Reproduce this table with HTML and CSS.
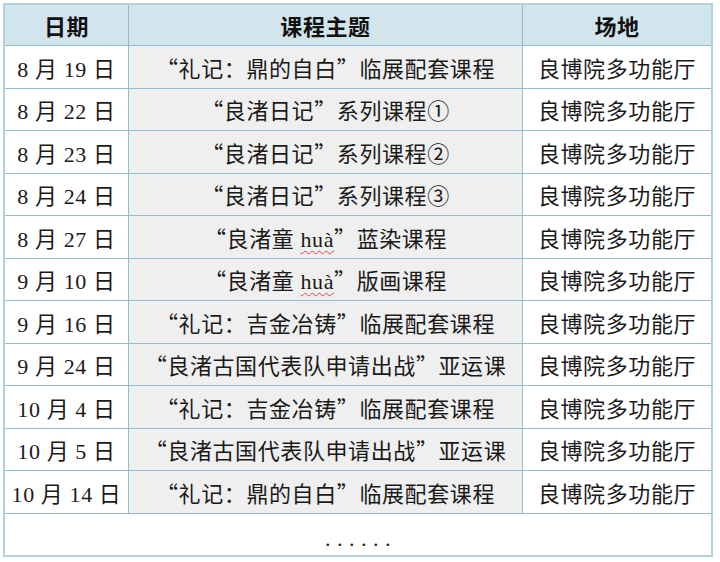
FILE: index.html
```html
<!DOCTYPE html>
<html lang="zh-CN">
<head>
<meta charset="utf-8">
<title>课程安排</title>
<link rel="stylesheet" href="styles.css">
</head>
<body>
<table class="schedule">
  <thead>
    <tr><th class="c-date">日期</th><th class="c-topic">课程主题</th><th class="c-place">场地</th></tr>
  </thead>
  <tbody>
    <tr><td class="c-date">8 月 19 日</td><td class="c-topic"><span class="q">“</span>礼记：鼎的自白<span class="q">”</span>临展配套课程</td><td class="c-place">良博院多功能厅</td></tr>
    <tr><td class="c-date">8 月 22 日</td><td class="c-topic"><span class="q">“</span>良渚日记<span class="q">”</span>系列课程①</td><td class="c-place">良博院多功能厅</td></tr>
    <tr><td class="c-date">8 月 23 日</td><td class="c-topic"><span class="q">“</span>良渚日记<span class="q">”</span>系列课程②</td><td class="c-place">良博院多功能厅</td></tr>
    <tr><td class="c-date">8 月 24 日</td><td class="c-topic"><span class="q">“</span>良渚日记<span class="q">”</span>系列课程③</td><td class="c-place">良博院多功能厅</td></tr>
    <tr><td class="c-date">8 月 27 日</td><td class="c-topic"><span class="q">“</span>良渚童 <span class="spell">huà</span><span class="q">”</span>蓝染课程</td><td class="c-place">良博院多功能厅</td></tr>
    <tr><td class="c-date">9 月 10 日</td><td class="c-topic"><span class="q">“</span>良渚童 <span class="spell">huà</span><span class="q">”</span>版画课程</td><td class="c-place">良博院多功能厅</td></tr>
    <tr><td class="c-date">9 月 16 日</td><td class="c-topic"><span class="q">“</span>礼记：吉金冶铸<span class="q">”</span>临展配套课程</td><td class="c-place">良博院多功能厅</td></tr>
    <tr><td class="c-date">9 月 24 日</td><td class="c-topic"><span class="q">“</span>良渚古国代表队申请出战<span class="q">”</span>亚运课</td><td class="c-place">良博院多功能厅</td></tr>
    <tr><td class="c-date">10 月 4 日</td><td class="c-topic"><span class="q">“</span>礼记：吉金冶铸<span class="q">”</span>临展配套课程</td><td class="c-place">良博院多功能厅</td></tr>
    <tr><td class="c-date">10 月 5 日</td><td class="c-topic"><span class="q">“</span>良渚古国代表队申请出战<span class="q">”</span>亚运课</td><td class="c-place">良博院多功能厅</td></tr>
    <tr><td class="c-date">10 月 14 日</td><td class="c-topic"><span class="q">“</span>礼记：鼎的自白<span class="q">”</span>临展配套课程</td><td class="c-place">良博院多功能厅</td></tr>
    <tr class="more"><td colspan="3">......</td></tr>
  </tbody>
</table>
</body>
</html>
```

FILE: styles.css
```css
html, body {
  margin: 0;
  padding: 0;
  background: #ffffff;
}

body {
  padding: 3px 0 0 3px;
  font-family: "Liberation Serif", "Noto Sans CJK SC", serif;
  color: #1a1a1a;
}

.schedule {
  border-collapse: collapse;
  width: 704px;
  table-layout: fixed;
  border: 2px solid #b4d1de;
}

.schedule th,
.schedule td {
  border: 1px solid #93bed2;
  text-align: center;
  vertical-align: middle;
  padding: 0;
  font-size: 22px;
  letter-spacing: 0.6px;
  white-space: nowrap;
}

.schedule th {
  height: 40px;
  background: #d2e4ec;
  font-weight: bold;
  color: #111;
}

.schedule td {
  height: 41.5px;
}

.c-date { width: 123px; }
.c-topic { width: 393px; }
.c-place { width: 188px; }

.schedule td.c-topic {
  background: #efefef;
}

.schedule td.c-date,
.schedule td.c-place {
  background: #ffffff;
}

.q {
  font-family: "Noto Sans CJK SC", sans-serif;
  font-feature-settings: "fwid";
}

.spell {
  text-decoration: underline wavy #e0403a;
  text-decoration-thickness: 1px;
  text-underline-offset: 3px;
}

.more td {
  height: 33px;
  vertical-align: bottom;
  background: #ffffff;
  font-size: 22px;
  letter-spacing: 6.5px;
  line-height: 16px;
  padding: 0 0 8px 6px;
}
```
